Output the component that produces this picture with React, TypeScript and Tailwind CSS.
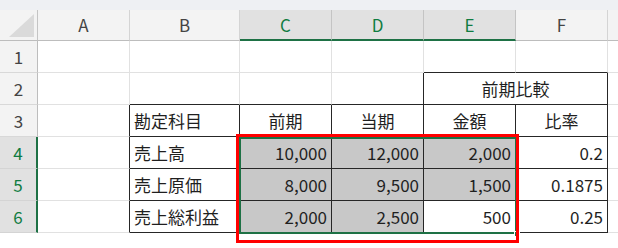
type Cell = {
  t?: string;
  a?: 'l' | 'c' | 'r';
  g?: boolean; // gray fill
  rd?: boolean; // dark right border
  bd?: boolean; // dark bottom border
  span?: boolean;
};

const columns = [
  { label: 'A', sel: false },
  { label: 'B', sel: false },
  { label: 'C', sel: true },
  { label: 'D', sel: true },
  { label: 'E', sel: true },
  { label: 'F', sel: false },
  { label: '', sel: false },
];

const T = { rd: true, bd: true };

const rows: { n: number; sel: boolean; cells: Cell[] }[] = [
  { n: 1, sel: false, cells: [{}, {}, {}, {}, { bd: true }, { bd: true }, {}] },
  {
    n: 2,
    sel: false,
    cells: [{}, { bd: true }, { bd: true }, { ...T }, { t: '前期比較', a: 'c', span: true, ...T }, {}],
  },
  {
    n: 3,
    sel: false,
    cells: [
      { rd: true },
      { t: '勘定科目', a: 'l', ...T },
      { t: '前期', a: 'c', ...T },
      { t: '当期', a: 'c', ...T },
      { t: '金額', a: 'c', ...T },
      { t: '比率', a: 'c', ...T },
      {},
    ],
  },
  {
    n: 4,
    sel: true,
    cells: [
      { rd: true },
      { t: '売上高', a: 'l', ...T },
      { t: '10,000', a: 'r', g: true, ...T },
      { t: '12,000', a: 'r', g: true, ...T },
      { t: '2,000', a: 'r', g: true, ...T },
      { t: '0.2', a: 'r', ...T },
      {},
    ],
  },
  {
    n: 5,
    sel: true,
    cells: [
      { rd: true },
      { t: '売上原価', a: 'l', ...T },
      { t: '8,000', a: 'r', g: true, ...T },
      { t: '9,500', a: 'r', g: true, ...T },
      { t: '1,500', a: 'r', g: true, ...T },
      { t: '0.1875', a: 'r', ...T },
      {},
    ],
  },
  {
    n: 6,
    sel: true,
    cells: [
      { rd: true },
      { t: '売上総利益', a: 'l', ...T },
      { t: '2,000', a: 'r', g: true, ...T },
      { t: '2,500', a: 'r', g: true, ...T },
      { t: '500', a: 'r', ...T },
      { t: '0.25', a: 'r', ...T },
      {},
    ],
  },
];

function BodyCell({ c, last }: { c: Cell; last: boolean }) {
  const align = c.a === 'l' ? 'justify-start pl-[4px]' : c.a === 'c' ? 'justify-center' : 'justify-end pr-[4px]';
  return (
    <div
      className={`flex items-center overflow-hidden whitespace-nowrap border-b ${last ? '' : 'border-r'} ${
        c.rd ? 'border-r-[#262626]' : 'border-r-[#e1e1e1]'
      } ${c.bd ? 'border-b-[#262626]' : 'border-b-[#e1e1e1]'} ${c.g ? 'bg-[#c8c8c8]' : 'bg-white'} ${
        c.span ? 'col-span-2' : ''
      } ${align}`}
    >
      {c.t}
    </div>
  );
}

export default function App() {
  return (
    <div
      className="relative w-[618px] h-[248px] overflow-hidden bg-white text-[17px] text-[#1f1f1f]"
      style={{ fontFamily: '"Noto Sans CJK JP", "Noto Sans", sans-serif' }}
    >
      <div className="h-[10px] bg-[#eef0f3]" />

      <div className="grid grid-cols-[38px_92px_110px_92px_92px_92px_92px_10px] grid-rows-[31px_32px_32px_32px_32px_32px_32px]">
        {/* corner */}
        <div className="relative bg-[#f3f3f3] border-r border-b border-r-[#c4c4c4] border-b-[#bdbdbd]">
          <svg className="absolute right-[3px] bottom-[3px]" width="25" height="23" viewBox="0 0 25 23">
            <polygon points="25,0 25,23 0,23" fill="#dadada" />
          </svg>
        </div>
        {columns.map((col, i) =>
          col.sel ? (
            <div
              key={i}
              className="flex items-center justify-center bg-[#e1e1e1] text-[#107c41] border-r border-r-[#c4c4c4] border-b-2 border-b-[#1e7145]"
            >
              {col.label}
            </div>
          ) : (
            <div
              key={i}
              className={`flex items-center justify-center bg-[#f3f3f3] text-[#444444] border-b border-b-[#bdbdbd] ${
                i === columns.length - 1 ? '' : 'border-r border-r-[#d4d4d4]'
              }`}
            >
              {col.label}
            </div>
          )
        )}

        {rows.map((row) => (
          <div key={row.n} className="contents">
            {row.sel ? (
              <div className="flex items-center justify-center bg-[#e1e1e1] text-[#107c41] border-b border-b-[#d4d4d4] border-r-2 border-r-[#1e7145]">
                {row.n}
              </div>
            ) : (
              <div className="flex items-center justify-center bg-[#f3f3f3] text-[#444444] border-b border-b-[#d8d8d8] border-r border-r-[#bdbdbd]">
                {row.n}
              </div>
            )}
            {row.cells.map((c, j) => (
              <BodyCell key={j} c={c} last={j === row.cells.length - 1} />
            ))}
          </div>
        ))}
      </div>

      {/* selection range C4:E6 */}
      <div className="absolute left-[239px] top-[137px] w-[278px] h-[97px] border-2 border-[#1e7145]">
        <div className="absolute -right-[5px] -bottom-[5px] w-[6px] h-[6px] bg-[#1e7145] border border-white" />
      </div>

      {/* red highlight */}
      <div className="absolute left-[236px] top-[134px] w-[283px] h-[109px] border-[3px] border-[#ff0000]" />
    </div>
  );
}
